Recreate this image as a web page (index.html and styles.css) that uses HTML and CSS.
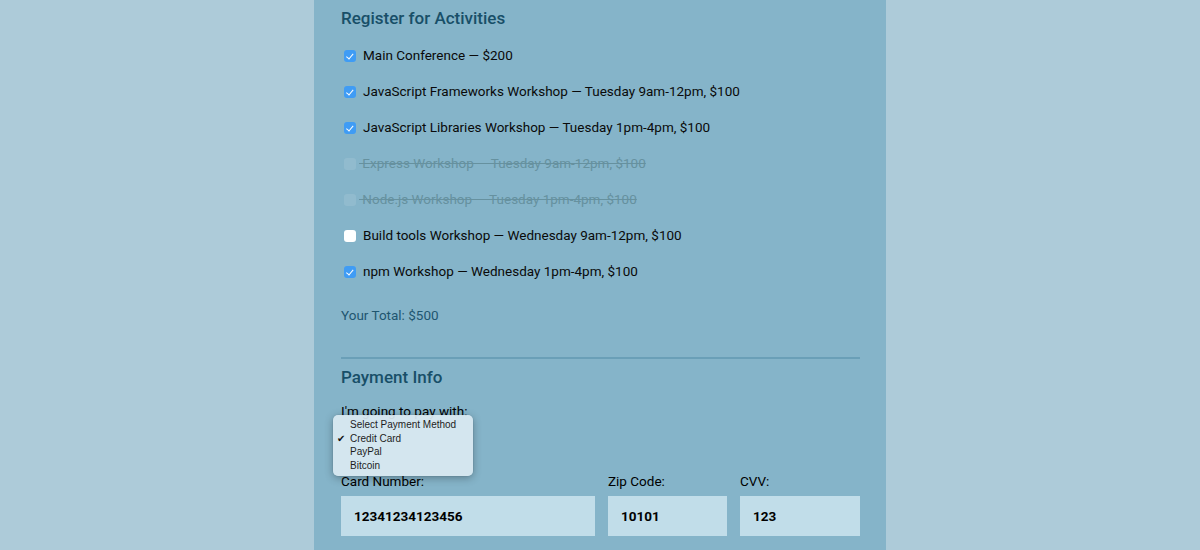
FILE: index.html
```html
<!DOCTYPE html>
<html>
<head>
<meta charset="utf-8">
<link rel="stylesheet" href="styles.css">
</head>
<body>
<main class="panel">
  <section class="activities">
    <h2 class="legend">Register for Activities</h2>
    <label class="activity"><input type="checkbox" checked><span>Main Conference — $200</span></label>
    <label class="activity"><input type="checkbox" checked><span>JavaScript Frameworks Workshop — Tuesday 9am-12pm, $100</span></label>
    <label class="activity"><input type="checkbox" checked><span>JavaScript Libraries Workshop — Tuesday 1pm-4pm, $100</span></label>
    <label class="activity disabled"><input type="checkbox" disabled><span>&nbsp;Express Workshop — Tuesday 9am-12pm, $100</span></label>
    <label class="activity disabled"><input type="checkbox" disabled><span>&nbsp;Node.js Workshop — Tuesday 1pm-4pm, $100</span></label>
    <label class="activity"><input type="checkbox"><span>Build tools Workshop — Wednesday 9am-12pm, $100</span></label>
    <label class="activity"><input type="checkbox" checked><span>npm Workshop — Wednesday 1pm-4pm, $100</span></label>
    <p class="total">Your Total: $500</p>
  </section>
  <hr class="divider">
  <section class="payment">
    <h2 class="legend">Payment Info</h2>
    <div class="pay-select">
      <p class="pay-label">I'm going to pay with:</p>
      <ul class="popup">
        <li>Select Payment Method</li>
        <li class="selected">Credit Card</li>
        <li>PayPal</li>
        <li>Bitcoin</li>
      </ul>
    </div>
    <div class="card-grid">
      <div class="field">
        <label class="field-label">Card Number:</label>
        <div class="field-input">12341234123456</div>
      </div>
      <div class="field">
        <label class="field-label">Zip Code:</label>
        <div class="field-input">10101</div>
      </div>
      <div class="field">
        <label class="field-label">CVV:</label>
        <div class="field-input">123</div>
      </div>
    </div>
  </section>
</main>
</body>
</html>
```

FILE: styles.css
```css
html, body {
  margin: 0;
  padding: 0;
  height: 100%;
}
body {
  background: #adcbd9;
  font-family: Roboto, "Liberation Sans", sans-serif;
  color: #000;
  overflow: hidden;
}
.panel {
  width: 519px;
  height: 550px;
  margin: 0 auto;
  padding: 0 26px 0 27px;
  background: #85b4c9;
  box-sizing: content-box;
}
.legend {
  margin: 0;
  font-size: 17px;
  font-weight: 500;
  line-height: 22px;
  color: #184f68;
}
.activities .legend {
  padding-top: 7px;
  margin-bottom: 8px;
}
.activity {
  display: flex;
  align-items: center;
  height: 36px;
  font-size: 13.5px;
  line-height: 20px;
  color: #0a0a0a;
}
.activity input {
  -webkit-appearance: none;
  appearance: none;
  width: 12px;
  height: 12px;
  margin: 2px 7px 0 3px;
  border-radius: 3px;
  background: #fff;
  flex: none;
  position: relative;
}
.activity input:checked {
  background: #3f9cf5;
}
.activity input:checked::after {
  content: "";
  position: absolute;
  left: 4px;
  top: 2px;
  width: 2.5px;
  height: 5.5px;
  border: solid #fff;
  border-width: 0 1.5px 1.5px 0;
  transform: rotate(40deg);
}
.activity input:disabled {
  background: rgba(255, 255, 255, 0.1);
}
.activity.disabled span {
  color: #66919f;
  text-decoration: line-through;
  margin-left: -4px;
}
.total {
  margin: 16px 0 0;
  font-size: 13.5px;
  line-height: 20px;
  color: #1f5670;
}
.divider {
  margin: 32px 0 0;
  border: 0;
  height: 2px;
  background: #6a9fb7;
}
.payment .legend {
  margin-top: 7px;
}
.pay-select {
  position: relative;
  height: 70px;
  margin-top: 13px;
}
.pay-label {
  margin: 0;
  font-size: 13.5px;
  line-height: 20px;
}
.popup {
  position: absolute;
  left: -8px;
  top: 14px;
  width: 140px;
  margin: 0;
  padding: 3px 0 4px;
  list-style: none;
  background: rgba(218, 234, 242, 0.93);
  border-radius: 5px;
  box-shadow: 0 2px 8px rgba(0, 0, 0, 0.3), 0 0 0 0.5px rgba(0, 0, 0, 0.08);
  font-family: "Liberation Sans", Arial, sans-serif;
  font-size: 10px;
  line-height: 13.5px;
  color: #1d1d1d;
}
.popup li {
  padding-left: 17px;
  position: relative;
}
.popup li.selected::before {
  content: "✔";
  position: absolute;
  left: 4px;
  top: 0;
  font-size: 10px;
  font-family: "DejaVu Sans", sans-serif;
  color: #111;
}
.card-grid {
  display: grid;
  grid-template-columns: 254px 119px 1fr;
  column-gap: 13px;
}
.field-label {
  display: block;
  font-size: 13.5px;
  line-height: 20px;
  margin-bottom: 5px;
}
.field-input {
  height: 40px;
  box-sizing: border-box;
  padding: 0 13px;
  background: #c1dde9;
  font-size: 13.5px;
  font-weight: 700;
  line-height: 40px;
}
```
